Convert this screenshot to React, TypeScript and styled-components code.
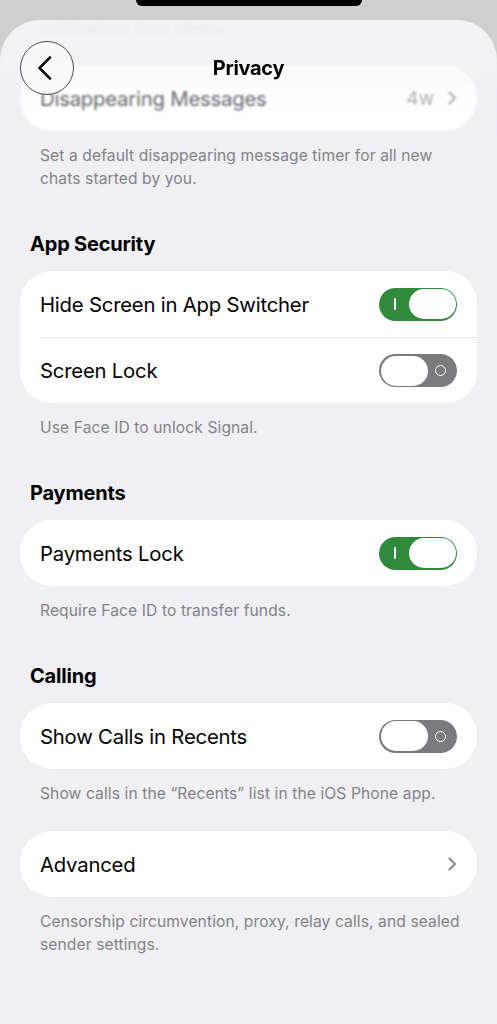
import React from 'react';
import styled, { createGlobalStyle } from 'styled-components';

const GlobalStyle = createGlobalStyle`
  html, body {
    margin: 0;
    padding: 0;
    background: #cfcfcf;
  }
  body {
    font-family: Inter, "Noto Sans", "Liberation Sans", sans-serif;
    -webkit-font-smoothing: antialiased;
  }
`;

const Screen = styled.div`
  width: 497px;
  height: 1024px;
  display: flex;
  flex-direction: column;
  overflow: hidden;
  background: #cfcfcf;
`;

const NotchStrip = styled.div`
  height: 20px;
  flex-shrink: 0;
  display: flex;
  justify-content: center;
`;

const Notch = styled.div`
  width: 226px;
  height: 6px;
  background: #000;
  border-radius: 0 0 8px 8px;
`;

const Sheet = styled.div`
  position: relative;
  flex: 1;
  background: #efeff4;
  border-radius: 40px 40px 0 0;
  overflow: hidden;
`;

const Content = styled.div`
  display: flex;
  flex-direction: column;
  padding: 0 20px;
`;

const Section = styled.section<{ $first?: boolean }>`
  display: flex;
  flex-direction: column;
  margin-top: ${(p) => (p.$first ? '0' : '26px')};
`;

const SectionTitle = styled.h2`
  margin: 0;
  padding: 16px 10px 15px;
  font-size: 20px;
  line-height: 24px;
  font-weight: 700;
  letter-spacing: -0.2px;
  color: #000;
`;

const Card = styled.div`
  background: #fff;
  border-radius: 32px;
  overflow: hidden;
`;

const Row = styled.div`
  height: 66px;
  display: flex;
  align-items: center;
  justify-content: space-between;
  padding: 0 20px;

  & + & {
    border-top: 1px solid #e2e2e6;
    height: 65px;
    margin-left: 20px;
    padding-left: 0;
  }
`;

const RowLabel = styled.span<{ $muted?: boolean }>`
  font-size: 20.3px;
  letter-spacing: -0.2px;
  color: ${(p) => (p.$muted ? '#55555a' : '#000')};
`;

const RowValue = styled.span`
  display: flex;
  align-items: center;
  gap: 14px;
  font-size: 19px;
  color: #a8a8ac;
`;

const Footer = styled.p`
  margin: 0;
  padding: 13px 8px 0 20px;
  font-size: 15.6px;
  line-height: 23px;
  letter-spacing: 0.1px;
  color: #838388;
`;

const Faded = styled.p`
  margin: -4px 0 0;
  padding: 0 20px 26px;
  font-size: 15.6px;
  line-height: 23px;
  color: #bcbcc0;
  filter: blur(1.3px);
`;

const Track = styled.div<{ $on: boolean }>`
  width: 78px;
  height: 33px;
  box-sizing: border-box;
  border-radius: 17px;
  padding: 1.5px;
  display: flex;
  align-items: center;
  flex-direction: ${(p) => (p.$on ? 'row' : 'row-reverse')};
  background: ${(p) => (p.$on ? '#2f8a3c' : '#7a7a7f')};
`;

const Mark = styled.div`
  flex: 1;
  display: flex;
  justify-content: center;
  align-items: center;
`;

const OnBar = styled.div`
  width: 2px;
  height: 12px;
  background: #fff;
  border-radius: 1px;
`;

const OffRing = styled.div`
  width: 9px;
  height: 9px;
  margin-right: 3px;
  border: 1.6px solid #fff;
  border-radius: 50%;
`;

const Knob = styled.div`
  width: 47px;
  height: 30px;
  border-radius: 15px;
  background: #fff;
`;

const Header = styled.header`
  position: absolute;
  top: 0;
  left: 0;
  right: 0;
  height: 118px;
  display: flex;
  align-items: center;
  justify-content: center;
  padding-bottom: 22px;
  box-sizing: border-box;
  backdrop-filter: blur(0.8px);
  background: linear-gradient(
    to bottom,
    rgba(244, 244, 247, 0.85) 0%,
    rgba(244, 244, 247, 0.5) 35%,
    rgba(244, 244, 247, 0.15) 65%,
    rgba(244, 244, 247, 0) 100%
  );
`;

const BackButton = styled.button`
  position: absolute;
  left: 20px;
  top: 21px;
  width: 54px;
  height: 54px;
  border-radius: 50%;
  border: 1px solid #4a4a4a;
  background: rgba(250, 250, 252, 0.85);
  display: flex;
  align-items: center;
  justify-content: center;
  padding: 0 4px 0 0;
`;

const Title = styled.h1`
  margin: 0;
  font-size: 20px;
  font-weight: 700;
  letter-spacing: -0.3px;
  color: #000;
`;

const Toggle = ({ on }: { on: boolean }) => (
  <Track $on={on}>
    <Mark>{on ? <OnBar /> : <OffRing />}</Mark>
    <Knob />
  </Track>
);

const Chevron = ({ color = '#8a8a8e' }: { color?: string }) => (
  <svg width="9" height="14" viewBox="0 0 9 14" fill="none">
    <path d="M1.5 1.5 7 7l-5.5 5.5" stroke={color} strokeWidth="2.2" strokeLinecap="round" strokeLinejoin="round" />
  </svg>
);

type Item = { label: string; on?: boolean; link?: boolean };

type Group = { title?: string; items: Item[]; footer: string };

const groups: Group[] = [
  {
    title: 'App Security',
    items: [
      { label: 'Hide Screen in App Switcher', on: true },
      { label: 'Screen Lock', on: false },
    ],
    footer: 'Use Face ID to unlock Signal.',
  },
  {
    title: 'Payments',
    items: [{ label: 'Payments Lock', on: true }],
    footer: 'Require Face ID to transfer funds.',
  },
  {
    title: 'Calling',
    items: [{ label: 'Show Calls in Recents', on: false }],
    footer: 'Show calls in the \u201cRecents\u201d list in the iOS Phone app.',
  },
  {
    items: [{ label: 'Advanced', link: true }],
    footer: 'Censorship circumvention, proxy, relay calls, and sealed sender settings.',
  },
];

export default function App() {
  return (
    <>
      <GlobalStyle />
      <Screen>
        <NotchStrip>
          <Notch />
        </NotchStrip>
        <Sheet>
          <Content>
            <Faded>notifications from others.</Faded>
            <Section $first>
              <Card>
                <Row>
                  <RowLabel $muted>Disappearing Messages</RowLabel>
                  <RowValue>
                    4w
                    <Chevron color="#a8a8ac" />
                  </RowValue>
                </Row>
              </Card>
              <Footer>Set a default disappearing message timer for all new chats started by you.</Footer>
            </Section>

            {groups.map((g) => (
              <Section key={g.footer}>
                {g.title && <SectionTitle>{g.title}</SectionTitle>}
                <Card>
                  {g.items.map((item) => (
                    <Row key={item.label}>
                      <RowLabel>{item.label}</RowLabel>
                      {item.link ? <Chevron /> : <Toggle on={!!item.on} />}
                    </Row>
                  ))}
                </Card>
                <Footer>{g.footer}</Footer>
              </Section>
            ))}
          </Content>

          <Header>
            <BackButton aria-label="Back">
              <svg width="16" height="24" viewBox="0 0 16 24" fill="none">
                <path d="M13 1.5 2.5 12 13 22.5" stroke="#111" strokeWidth="2.6" strokeLinecap="round" strokeLinejoin="round" />
              </svg>
            </BackButton>
            <Title>Privacy</Title>
          </Header>
        </Sheet>
      </Screen>
    </>
  );
}
